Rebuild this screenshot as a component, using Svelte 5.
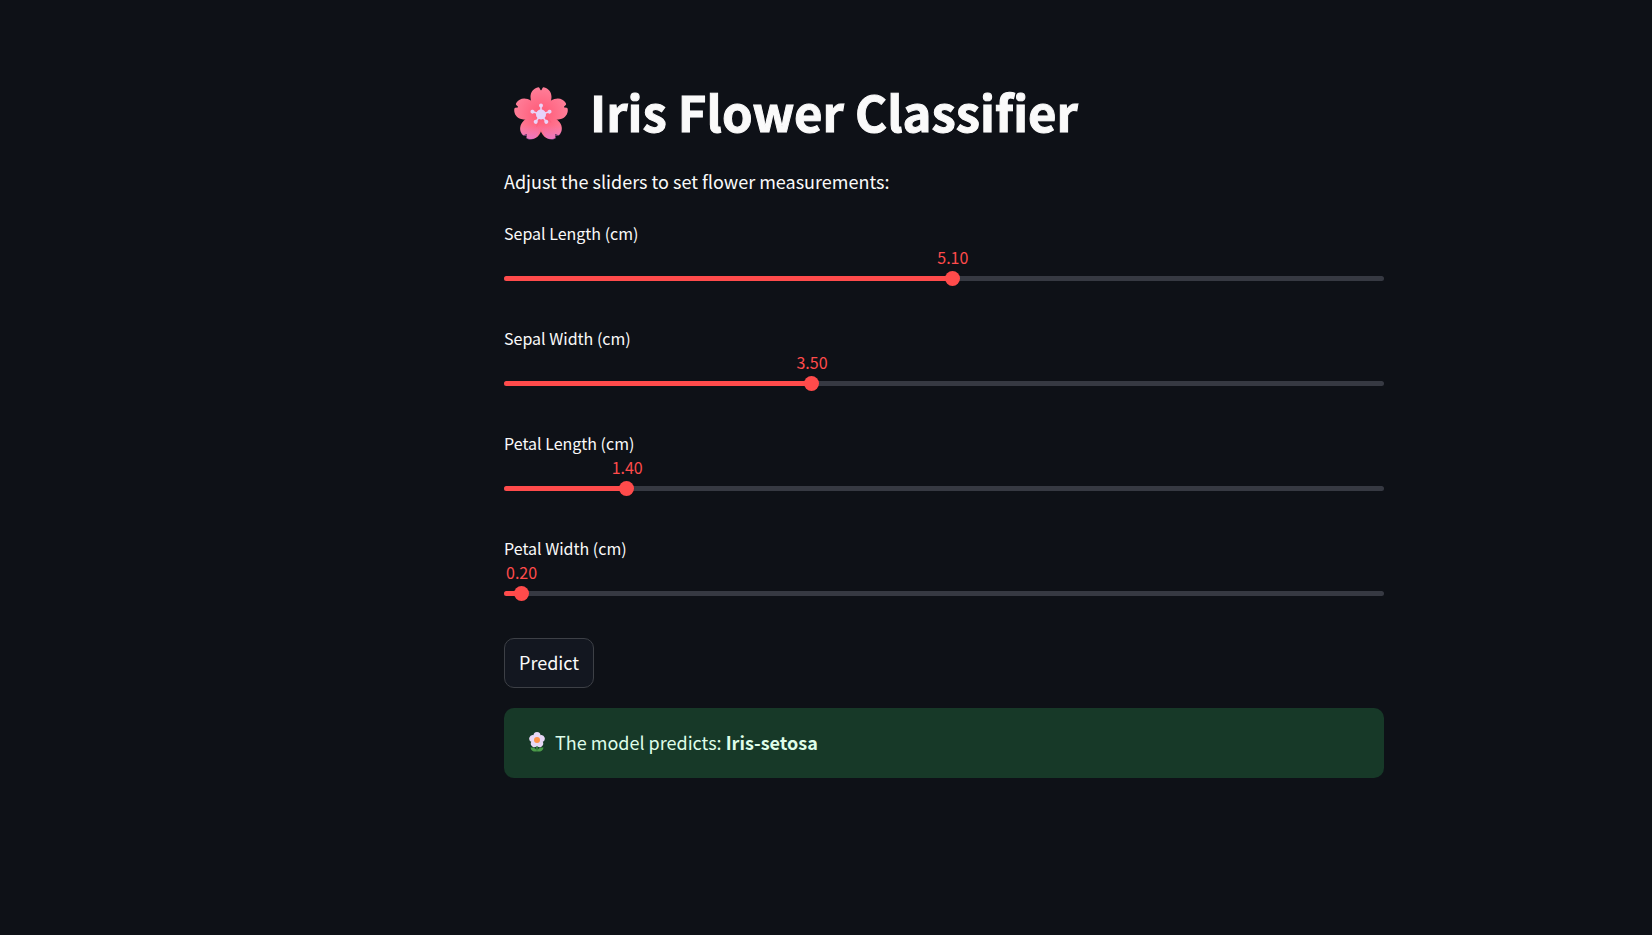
<script>
  let measurements = $state([
    { id: 'sepal-length', label: 'Sepal Length (cm)', value: 5.1 },
    { id: 'sepal-width', label: 'Sepal Width (cm)', value: 3.5 },
    { id: 'petal-length', label: 'Petal Length (cm)', value: 1.4 },
    { id: 'petal-width', label: 'Petal Width (cm)', value: 0.2 }
  ]);
  const max = 10;
  const fifths = [0, 72, 144, 216, 288];
</script>

<main>
  <div class="content">
    <h1>
      <svg class="blossom" viewBox="0 0 54 54" aria-hidden="true">
        <defs>
          <radialGradient id="petals" gradientUnits="userSpaceOnUse" cx="27" cy="27" r="28">
            <stop offset="0" stop-color="#ff5874" />
            <stop offset="0.45" stop-color="#ff6a86" />
            <stop offset="1" stop-color="#ff809a" />
          </radialGradient>
          <linearGradient id="glow" gradientUnits="userSpaceOnUse" x1="0" y1="38" x2="0" y2="54">
            <stop offset="0" stop-color="#e878d8" stop-opacity="0" />
            <stop offset="1" stop-color="#e070dc" stop-opacity="0.7" />
          </linearGradient>
          <path
            id="petal"
            d="M27 29C22 24 16.500 17 16.500 10C16.500 5 19.500 1.500 23.500 0.500Q25 0 25.500 1L26.500 3Q27 3.600 27.500 3L28.500 1Q29 0 30.500 0.500C34.500 1.500 37.500 5 37.500 10C37.500 17 32 24 27 29Z"
          />
        </defs>
        {#each fifths as angle}
          <use href="#petal" fill="url(#petals)" transform="rotate({angle} 27 27.500)" />
        {/each}
        {#each [144, 216] as angle}
          <g transform="rotate({angle} 27 27.500)">
            <path d="M27 27C24 22 23.500 18 23.500 15" fill="none" stroke="#f04c70" stroke-opacity="0.25" />
          </g>
        {/each}
        <path
          d="M7 39L27 29L47 39C49 44 46 49 43 49L41 49L42 51C38 54 33 52 31 49L27 41L23 49C21 52 16 54 12 51L13 49L11 49C8 49 5 44 7 39Z"
          fill="url(#glow)"
        />
        {#each fifths as angle}
          <g transform="rotate({angle} 27 27.500)">
            <path d="M27 27V18" stroke="#ead3f8" stroke-width="1.600" />
            <circle cx="27" cy="18.500" r="2" fill="#ead3f8" />
          </g>
        {/each}
        <circle cx="27" cy="27.500" r="5" fill="#e6d3fb" />
      </svg>
      <span>Iris Flower Classifier</span>
    </h1>
    <p>Adjust the sliders to set flower measurements:</p>

    <form onsubmit={(e) => e.preventDefault()}>
      {#each measurements as m (m.id)}
        <div class="field">
          <label for={m.id}>{m.label}</label>
          <div class="value-row">
            <output for={m.id} style="left: {(m.value / max) * 100}%">{m.value.toFixed(2)}</output>
          </div>
          <div class="slider">
            <div class="track"><div class="fill" style="width: {(m.value / max) * 100}%"></div></div>
            <input id={m.id} type="range" min="0" {max} step="0.1" bind:value={m.value} />
          </div>
        </div>
      {/each}
      <button type="submit">Predict</button>
    </form>

    <div class="result" role="status">
      <svg class="daisy" viewBox="0 0 16 20" aria-hidden="true">
        <path d="M8 13V19" stroke="#3f9146" stroke-width="1.500" />
        <path d="M8 19.500C5 20 2 19 1.500 15.500C5 15 7.500 16.500 8 19.500C8.500 16.500 11 15 14.500 15.500C14 19 11 20 8 19.500Z" fill="#4b9b49" />
        <g fill="#e7d7f6">
          {#each fifths as angle}
            <ellipse cx="8" cy="4" rx="3.600" ry="4" transform="rotate({angle} 8 8)" />
          {/each}
        </g>
        <circle cx="8" cy="8" r="3" fill="#ff9348" />
      </svg>
      <span>The model predicts: <strong>Iris-setosa</strong></span>
    </div>
  </div>
</main>

<style>
  :global(body) {
    margin: 0;
    background: #0e1117;
  }
  main {
    display: flex;
    justify-content: center;
    box-sizing: border-box;
    min-height: 100vh;
    padding: 80px 0 80px 236px;
    color: #fafafa;
    font-family: "Source Sans Pro", "Noto Sans CJK SC", sans-serif;
    font-size: 18px;
    line-height: 32px;
  }
  .content {
    width: 100%;
    max-width: 880px;
  }
  h1 {
    display: flex;
    align-items: flex-end;
    gap: 22px;
    margin: 0;
    padding-left: 10px;
    font-size: 49px;
    font-weight: 700;
    line-height: 66px;
    -webkit-text-stroke: 1px currentColor;
  }
  h1 span {
    margin-top: -2px;
    padding-bottom: 2px;
  }
  .blossom {
    flex: none;
    width: 54px;
    height: 54px;
    padding-bottom: 5px;
    -webkit-text-stroke: 0;
  }
  p {
    margin: 19px 0 20px;
  }
  .field {
    height: 85px;
    margin-bottom: 20px;
  }
  label {
    display: block;
    font-size: 16px;
    line-height: 32px;
  }
  .value-row {
    position: relative;
    height: 18px;
  }
  output {
    position: absolute;
    transform: translateX(-50%);
    color: #ff4b4b;
    font-size: 16px;
    line-height: 16px;
  }
  .slider {
    display: grid;
    align-items: center;
    height: 23px;
  }
  .track,
  input {
    grid-area: 1 / 1;
  }
  .track {
    height: 5px;
    overflow: hidden;
    border-radius: 4px;
    background: #363942;
  }
  .fill {
    height: 100%;
    background: #ff4b4b;
  }
  input {
    height: 15px;
    margin: 0 -7px 0 -8px;
    appearance: none;
    background: transparent;
    cursor: pointer;
  }
  input::-webkit-slider-thumb {
    width: 15px;
    height: 15px;
    appearance: none;
    border-radius: 50%;
    background: #ff4b4b;
  }
  button {
    height: 50px;
    margin-top: 1px;
    padding: 0 14px 2px;
    border: 1px solid #3d4046;
    border-radius: 10px;
    background: #131720;
    color: inherit;
    font: inherit;
    cursor: pointer;
  }
  .result {
    display: flex;
    align-items: center;
    gap: 10px;
    margin-top: 20px;
    padding: 18px 25px 20px;
    border-radius: 10px;
    background: #173928;
    color: #dffde9;
  }
  .daisy {
    flex: none;
    width: 16px;
    height: 20px;
  }
</style>
